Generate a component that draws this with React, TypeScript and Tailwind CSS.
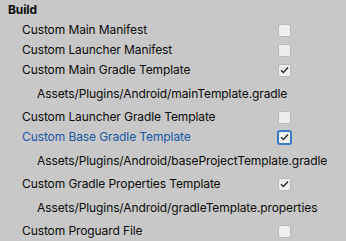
import React from "react";

type Row =
  | { kind: "toggle"; label: string; checked: boolean; focused?: boolean }
  | { kind: "path"; text: string };

const rows: Row[] = [
  { kind: "toggle", label: "Custom Main Manifest", checked: false },
  { kind: "toggle", label: "Custom Launcher Manifest", checked: false },
  { kind: "toggle", label: "Custom Main Gradle Template", checked: true },
  { kind: "path", text: "Assets/Plugins/Android/mainTemplate.gradle" },
  { kind: "toggle", label: "Custom Launcher Gradle Template", checked: false },
  { kind: "toggle", label: "Custom Base Gradle Template", checked: true, focused: true },
  { kind: "path", text: "Assets/Plugins/Android/baseProjectTemplate.gradle" },
  { kind: "toggle", label: "Custom Gradle Properties Template", checked: true },
  { kind: "path", text: "Assets/Plugins/Android/gradleTemplate.properties" },
  { kind: "toggle", label: "Custom Proguard File", checked: false },
];

function Checkbox({ checked, focused }: { checked: boolean; focused?: boolean }) {
  return (
    <div
      className={
        focused
          ? "w-[13px] h-[13px] rounded-[2px] border border-[#3a79c4] shadow-[0_0_0_1px_#3a79c4] bg-[#f0f0f0] flex items-center justify-center"
          : "w-[13px] h-[13px] rounded-[2px] border border-[#b8b8b8] bg-[#eeeeee] flex items-center justify-center"
      }
    >
      {checked && (
        <svg width="9" height="8" viewBox="0 0 9 8" fill="none">
          <path d="M1 4.2 L3.4 6.5 L8 1.5" stroke="#2b2b2b" strokeWidth="1.4" />
        </svg>
      )}
    </div>
  );
}

export default function App() {
  return (
    <div
      className="w-[346px] h-[241px] bg-[#c8c8c8] text-[12px] tracking-[-0.1px] text-[#0b0b0b] overflow-hidden"
      style={{ fontFamily: "Inter, 'Liberation Sans', sans-serif" }}
    >
      <div className="h-5 flex items-center pl-2 font-bold">Build</div>
      {rows.map((r, i) =>
        r.kind === "toggle" ? (
          <div key={i} className="h-5 flex items-center pl-[22px] pr-[55px]">
            <span className={r.focused ? "flex-1 text-[#1a57a6]" : "flex-1"}>{r.label}</span>
            <Checkbox checked={r.checked} focused={r.focused} />
          </div>
        ) : (
          <div key={i} className="h-[27px] flex items-center pl-[37px]">
            {r.text}
          </div>
        )
      )}
    </div>
  );
}
